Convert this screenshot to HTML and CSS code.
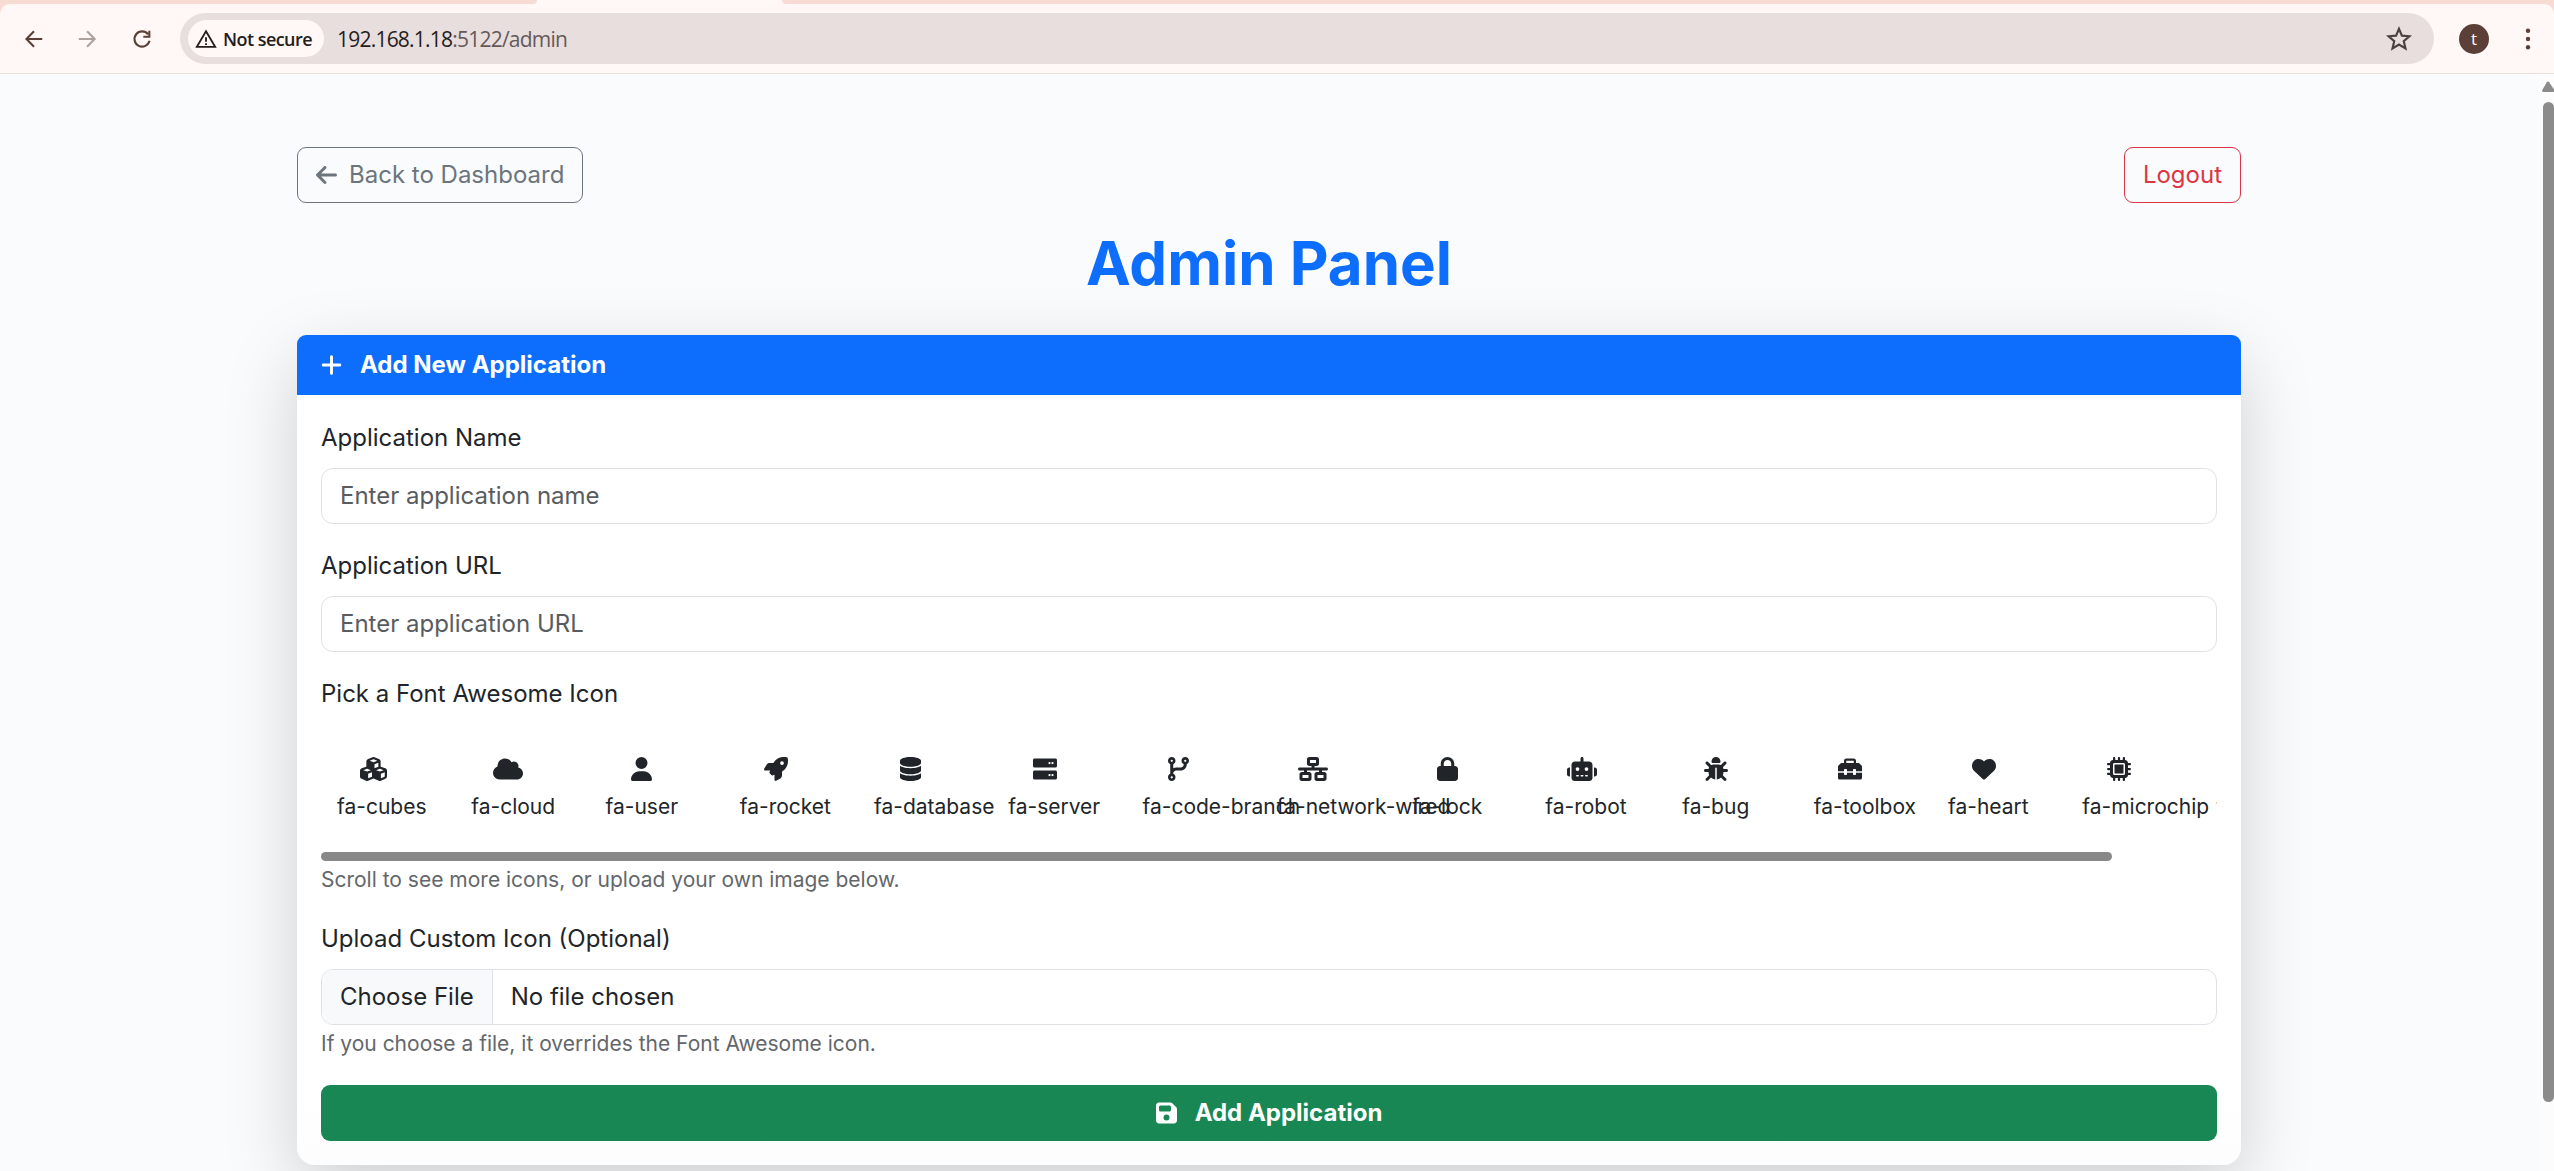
FILE: index.html
```html
<!DOCTYPE html>
<html lang="en">
<head>
<meta charset="utf-8">
<title>Admin Panel</title>
<link rel="stylesheet" href="styles.css">
</head>
<body>
<header class="browser">
  <div class="tabstrip"><div class="tabstrip-left"></div><div class="tabstrip-active"></div><div class="tabstrip-right"></div></div>
  <div class="toolbar">
    <svg class="nav-icon" viewBox="0 0 24 24"><path d="M21 12H4M12 3.500 3.800 12l8.200 8.500"/></svg>
    <svg class="nav-icon nav-disabled" viewBox="0 0 24 24"><path d="M2 12h17M11 3.500l8.200 8.500-8.200 8.500"/></svg>
    <svg class="nav-icon" viewBox="0 0 24 24"><path d="M18.600 6.800A8.300 8.300 0 1 0 20.200 14M20 3v6.600h-6.600"/></svg>
    <div class="omnibox">
      <div class="chip">
        <svg class="warn" viewBox="0 0 24 24"><path d="M12 3.500 22 20.500H2zM12 10v5M12 16.600v2"/></svg>
        <span>Not secure</span>
      </div>
      <div class="url"><span class="host">192.168.1.18</span>:5122/admin</div>
      <svg class="star" viewBox="0 0 24 24"><path d="M12 2.600l2.700 6.300 6.900.6-5.200 4.500 1.600 6.700-6-3.600-6 3.600 1.600-6.700-5.200-4.500 6.900-.6z"/></svg>
    </div>
    <div class="avatar">t</div>
    <svg class="dots" viewBox="0 0 6 24"><circle cx="3" cy="3.700" r="2.200"/><circle cx="3" cy="12" r="2.200"/><circle cx="3" cy="20.300" r="2.200"/></svg>
  </div>
</header>

<div class="viewport">
  <main class="page">
    <div class="container">
      <div class="topbar">
        <a class="btn btn-secondary"><svg class="fa" viewBox="0 0 448 512"><path d="M9.400 233.400c-12.500 12.500-12.500 32.800 0 45.300l160 160c12.500 12.500 32.800 12.500 45.300 0s12.500-32.800 0-45.300L109.200 288 416 288c17.700 0 32-14.300 32-32s-14.300-32-32-32l-306.700 0L214.600 118.600c12.500-12.500 12.500-32.800 0-45.300s-32.800-12.500-45.300 0l-160 160z"/></svg>Back to Dashboard</a>
        <a class="btn btn-danger">Logout</a>
      </div>
      <h1>Admin Panel</h1>
      <section class="card">
        <div class="card-header"><svg class="fa" viewBox="0 0 448 512"><path d="M256 80c0-17.700-14.300-32-32-32s-32 14.300-32 32l0 144L48 224c-17.700 0-32 14.300-32 32s14.300 32 32 32l144 0 0 144c0 17.700 14.300 32 32 32s32-14.300 32-32l0-144 144 0c17.700 0 32-14.300 32-32s-14.300-32-32-32l-144 0 0-144z"/></svg>Add New Application</div>
        <div class="card-body">
          <div class="field">
            <label class="label">Application Name</label>
            <div class="control placeholder">Enter application name</div>
          </div>
          <div class="field">
            <label class="label">Application URL</label>
            <div class="control placeholder">Enter application URL</div>
          </div>
          <div class="field">
            <label class="label">Pick a Font Awesome Icon</label>
            <div class="picker">
              <div class="icons">
                <div class="item"><svg class="fa" viewBox="0 0 576 512"><path d="M290.800 48.600l78.400 29.700L288 109.500 206.800 78.300l78.400-29.700c1.800-.7 3.800-.7 5.700 0zM136 92.500V204.700c-1.300 .4-2.600 .8-3.900 1.300l-96 36.400C14.400 250.600 0 271.500 0 294.700V413.900c0 22.200 13.100 42.300 33.500 51.300l96 42.200c14.400 6.300 30.700 6.300 45.100 0L288 457.500l113.500 49.900c14.400 6.300 30.700 6.300 45.100 0l96-42.200c20.300-8.900 33.500-29.100 33.500-51.300V294.700c0-23.300-14.400-44.100-36.100-52.400l-96-36.400c-1.300-.5-2.600-.9-3.900-1.300V92.500c0-23.300-14.400-44.100-36.100-52.400l-96-36.400c-12.800-4.800-26.900-4.800-39.700 0l-96 36.400C150.400 48.400 136 69.300 136 92.500zM392 210.600l-82.400 31.200V152.600L392 121v89.600zM154.800 250.900l78.400 29.700L152 311.700 70.800 280.600l78.400-29.700c1.800-.7 3.800-.7 5.700 0zm18.800 204.400V354.800L256 323.200v95.900l-82.400 36.200zM421.200 250.900c1.800-.7 3.800-.7 5.700 0l78.400 29.700L424 311.700l-81.200-31.100 78.400-29.700zM523.200 421.200l-77.600 34.100V354.800L528 323.200v90.700c0 3.200-1.900 6-4.800 7.300z"/></svg><span>fa-cubes</span></div>
                <div class="item"><svg class="fa" viewBox="0 0 640 512"><path d="M0 336c0 79.500 64.500 144 144 144l368 0c70.700 0 128-57.300 128-128c0-61.900-44-113.600-102.400-125.400c4.100-10.700 6.400-22.400 6.400-34.600c0-53-43-96-96-96c-19.700 0-38.100 6-53.300 16.200C367 64.200 315.300 32 256 32C167.600 32 96 103.600 96 192c0 2.700 .1 5.400 .2 8.100C40.200 219.800 0 273.200 0 336z"/></svg><span>fa-cloud</span></div>
                <div class="item"><svg class="fa" viewBox="0 0 448 512"><path d="M224 256A128 128 0 1 0 224 0a128 128 0 1 0 0 256zm-45.700 48C79.800 304 0 383.800 0 482.300C0 498.700 13.300 512 29.700 512l388.600 0c16.400 0 29.700-13.300 29.700-29.700C448 383.800 368.200 304 269.700 304l-91.400 0z"/></svg><span>fa-user</span></div>
                <div class="item"><svg class="fa" viewBox="0 0 512 512"><path d="M156.600 384.900L125.700 354c-8.500-8.500-11.500-20.800-7.700-32.200c3-8.900 7-20.500 11.800-33.800L24 288c-8.600 0-16.600-4.600-20.900-12.100s-4.200-16.700 .2-24.100l52.500-88.500c13-21.900 36.500-35.300 61.900-35.300l82.300 0c2.400-4 4.800-7.700 7.200-11.300C289.100-4.100 411.100-8.100 483.900 5.300c11.600 2.100 20.600 11.200 22.800 22.800c13.400 72.900 9.300 194.800-111.400 276.700c-3.500 2.400-7.300 4.800-11.300 7.200v82.300c0 25.400-13.400 49-35.300 61.900l-88.500 52.500c-7.400 4.400-16.600 4.500-24.100 .2s-12.100-12.200-12.100-20.900V380.800c-14.100 4.900-26.400 8.900-35.700 11.900c-11.200 3.600-23.400 .5-31.800-7.800zM384 168a40 40 0 1 0 0-80 40 40 0 1 0 0 80z"/></svg><span>fa-rocket</span></div>
                <div class="item"><svg class="fa" viewBox="0 0 448 512"><path d="M448 80v48c0 44.200-100.300 80-224 80S0 172.200 0 128V80C0 35.800 100.300 0 224 0S448 35.800 448 80zM393.200 214.700c20.800-7.400 39.900-16.900 54.800-28.600V288c0 44.200-100.300 80-224 80S0 332.200 0 288V186.100c14.900 11.800 34 21.200 54.800 28.600C99.700 230.700 159.500 240 224 240s124.300-9.300 169.200-25.300zM0 346.100c14.900 11.800 34 21.200 54.800 28.600C99.700 390.700 159.500 400 224 400s124.300-9.300 169.200-25.300c20.800-7.400 39.900-16.900 54.800-28.600V432c0 44.200-100.300 80-224 80S0 476.200 0 432V346.100z"/></svg><span>fa-database</span></div>
                <div class="item"><svg class="fa" viewBox="0 0 512 512"><path d="M32 32C14.400 32 0 46.400 0 64v128c0 17.600 14.400 32 32 32H480c17.600 0 32-14.400 32-32V64c0-17.600-14.400-32-32-32H32zm320 72a24 24 0 1 1 0 48 24 24 0 1 1 0-48zm40 24a24 24 0 1 1 48 0 24 24 0 1 1 -48 0zM32 288c-17.600 0-32 14.400-32 32v128c0 17.600 14.400 32 32 32H480c17.600 0 32-14.400 32-32V320c0-17.600-14.400-32-32-32H32zm320 72a24 24 0 1 1 0 48 24 24 0 1 1 0-48zm40 24a24 24 0 1 1 48 0 24 24 0 1 1 -48 0z"/></svg><span>fa-server</span></div>
                <div class="item"><svg class="fa" viewBox="0 0 448 512"><path d="M80 104a24 24 0 1 0 0-48 24 24 0 1 0 0 48zm80-24c0 32.800-19.700 61-48 73.300v87.800c18.800-10.900 40.700-17.100 64-17.100h96c35.300 0 64-28.700 64-64v-6.700C307.700 141 288 112.800 288 80c0-44.200 35.800-80 80-80s80 35.800 80 80c0 32.800-19.700 61-48 73.300V160c0 70.700-57.300 128-128 128H176c-35.300 0-64 28.700-64 64v6.700c28.300 12.300 48 40.500 48 73.300c0 44.200-35.800 80-80 80s-80-35.800-80-80c0-32.800 19.700-61 48-73.300V352 153.300C19.700 141 0 112.800 0 80C0 35.800 35.800 0 80 0s80 35.800 80 80zm232 0a24 24 0 1 0 -48 0 24 24 0 1 0 48 0zM80 456a24 24 0 1 0 0-48 24 24 0 1 0 0 48z"/></svg><span>fa-code-branch</span></div>
                <div class="item"><svg class="fa" viewBox="0 0 640 512"><path d="M256 64H384v64H256V64zM240 0c-26.500 0-48 21.500-48 48v96c0 26.500 21.500 48 48 48h48v32H32c-17.700 0-32 14.300-32 32s14.300 32 32 32h96v32H80c-26.500 0-48 21.500-48 48v96c0 26.500 21.500 48 48 48H240c26.500 0 48-21.500 48-48V368c0-26.500-21.500-48-48-48H192V288H448v32H400c-26.500 0-48 21.500-48 48v96c0 26.500 21.500 48 48 48H560c26.500 0 48-21.500 48-48V368c0-26.500-21.500-48-48-48H512V288h96c17.700 0 32-14.300 32-32s-14.300-32-32-32H352V192h48c26.500 0 48-21.500 48-48V48c0-26.500-21.500-48-48-48H240zM96 448V384H224v64H96zm320-64H544v64H416V384z"/></svg><span>fa-network-wired</span></div>
                <div class="item"><svg class="fa" viewBox="0 0 448 512"><path d="M144 144v48H304V144c0-44.200-35.800-80-80-80s-80 35.800-80 80zM80 192V144C80 64.500 144.500 0 224 0s144 64.500 144 144v48h16c35.300 0 64 28.700 64 64V448c0 35.300-28.700 64-64 64H64c-35.300 0-64-28.700-64-64V256c0-35.300 28.700-64 64-64H80z"/></svg><span>fa-lock</span></div>
                <div class="item"><svg class="fa" viewBox="0 0 640 512"><path d="M320 0c17.700 0 32 14.300 32 32V96H472c39.800 0 72 32.200 72 72V440c0 39.800-32.200 72-72 72H168c-39.800 0-72-32.200-72-72V168c0-39.800 32.200-72 72-72H288V32c0-17.700 14.300-32 32-32zM208 384c-8.800 0-16 7.200-16 16s7.200 16 16 16h32c8.800 0 16-7.200 16-16s-7.200-16-16-16H208zm96 0c-8.800 0-16 7.200-16 16s7.200 16 16 16h32c8.800 0 16-7.200 16-16s-7.200-16-16-16H304zm96 0c-8.800 0-16 7.200-16 16s7.200 16 16 16h32c8.800 0 16-7.200 16-16s-7.200-16-16-16H400zM264 256a40 40 0 1 0 -80 0 40 40 0 1 0 80 0zm152 40a40 40 0 1 0 0-80 40 40 0 1 0 0 80zM48 224H64V416H48c-26.500 0-48-21.500-48-48V272c0-26.500 21.500-48 48-48zm544 0c26.500 0 48 21.500 48 48v96c0 26.500-21.500 48-48 48H576V224h16z"/></svg><span>fa-robot</span></div>
                <div class="item"><svg class="fa" viewBox="0 0 512 512"><path d="M256 0c53 0 96 43 96 96v3.600c0 15.700-12.700 28.400-28.400 28.400H188.400c-15.700 0-28.400-12.700-28.400-28.400V96c0-53 43-96 96-96zM41.400 105.400c12.500-12.500 32.800-12.500 45.300 0l64 64c.7 .7 1.300 1.400 1.900 2.100c14.200-7.300 30.400-11.400 47.500-11.400H312c17.100 0 33.200 4.100 47.500 11.400c.6-.7 1.200-1.400 1.900-2.100l64-64c12.500-12.500 32.800-12.500 45.300 0s12.500 32.800 0 45.300l-64 64c-.7 .7-1.400 1.300-2.100 1.900c6.200 12 10.100 25.300 11.100 39.500H480c17.700 0 32 14.300 32 32s-14.300 32-32 32H416c0 24.600-5.500 47.800-15.400 68.600c2.200 1.300 4.200 2.900 6 4.800l64 64c12.500 12.500 12.500 32.800 0 45.300s-32.800 12.500-45.300 0l-63.100-63.100c-24.500 21.800-55.800 36.200-90.300 39.600V240c0-8.800-7.200-16-16-16s-16 7.200-16 16V479.200c-34.500-3.400-65.800-17.800-90.300-39.600L86.600 502.600c-12.500 12.500-32.800 12.500-45.300 0s-12.500-32.800 0-45.300l64-64c1.900-1.900 3.900-3.400 6-4.800C101.500 367.800 96 344.600 96 320H32c-17.700 0-32-14.300-32-32s14.300-32 32-32H96.300c1.100-14.100 5-27.500 11.100-39.500c-.7-.6-1.400-1.200-2.100-1.900l-64-64c-12.500-12.500-12.500-32.800 0-45.300z"/></svg><span>fa-bug</span></div>
                <div class="item"><svg class="fa" viewBox="0 0 512 512"><path d="M502.600 182.600l-45.250-45.250C451.400 131.400 443.300 128 434.800 128H384V80C384 53.500 362.500 32 336 32h-160C149.500 32 128 53.500 128 80V128H77.250c-8.500 0-16.620 3.375-22.620 9.375L9.375 182.600C3.375 188.600 0 196.800 0 205.300V304h128v-32C128 263.100 135.100 256 144 256h32C184.900 256 192 263.100 192 272v32h128v-32C320 263.100 327.100 256 336 256h32C376.900 256 384 263.100 384 272v32h128V205.300C512 196.800 508.600 188.600 502.600 182.600zM336 128h-160V80h160V128zM384 368c0 8.875-7.125 16-16 16h-32c-8.875 0-16-7.125-16-16v-32H192v32C192 376.900 184.900 384 176 384h-32C135.100 384 128 376.900 128 368v-32H0V448c0 17.620 14.380 32 32 32h448c17.620 0 32-14.380 32-32v-112h-128V368z"/></svg><span>fa-toolbox</span></div>
                <div class="item"><svg class="fa" viewBox="0 0 512 512"><path d="M47.600 300.400L228.300 469.100c7.500 7 17.400 10.900 27.700 10.900s20.200-3.900 27.700-10.900L464.400 300.400c30.400-28.300 47.600-68 47.600-109.500v-5.800c0-69.900-50.500-129.500-119.400-141C347 36.500 300.600 51.400 268 84L256 96 244 84c-32.600-32.600-79-47.500-124.600-39.900C50.500 55.600 0 115.200 0 185.100v5.800c0 41.500 17.200 81.200 47.600 109.500z"/></svg><span>fa-heart</span></div>
                <div class="item"><svg class="fa" viewBox="0 0 512 512"><path d="M176 24c0-13.300-10.700-24-24-24s-24 10.700-24 24V64c-35.300 0-64 28.700-64 64H24c-13.300 0-24 10.700-24 24s10.700 24 24 24H64v56H24c-13.300 0-24 10.700-24 24s10.700 24 24 24H64v56H24c-13.300 0-24 10.700-24 24s10.700 24 24 24H64c0 35.300 28.700 64 64 64v40c0 13.300 10.700 24 24 24s24-10.700 24-24V448h56v40c0 13.300 10.700 24 24 24s24-10.700 24-24V448h56v40c0 13.300 10.700 24 24 24s24-10.700 24-24V448c35.300 0 64-28.700 64-64h40c13.300 0 24-10.700 24-24s-10.700-24-24-24H448V280h40c13.300 0 24-10.700 24-24s-10.700-24-24-24H448V176h40c13.300 0 24-10.700 24-24s-10.700-24-24-24H448c0-35.300-28.700-64-64-64V24c0-13.300-10.700-24-24-24s-24 10.700-24 24V64H280V24c0-13.300-10.700-24-24-24s-24 10.700-24 24V64H176V24zM160 128H352c17.700 0 32 14.300 32 32V352c0 17.700-14.300 32-32 32H160c-17.700 0-32-14.300-32-32V160c0-17.700 14.300-32 32-32zm192 32H160V352H352V160z"/></svg><span>fa-microchip</span></div>
                <div class="item"><span class="item-cut">fa-terminal</span></div>
              </div>
              <div class="hscroll"></div>
            </div>
            <small class="help">Scroll to see more icons, or upload your own image below.</small>
          </div>
          <div class="field">
            <label class="label">Upload Custom Icon (Optional)</label>
            <div class="control file"><span class="file-button">Choose File</span><span class="file-name">No file chosen</span></div>
            <small class="help">If you choose a file, it overrides the Font Awesome icon.</small>
          </div>
          <div class="submit"><svg class="fa" viewBox="0 0 448 512"><path d="M64 32C28.700 32 0 60.700 0 96V416c0 35.300 28.700 64 64 64H384c35.300 0 64-28.700 64-64V173.300c0-17-6.700-33.300-18.700-45.300L352 50.700C340 38.700 323.700 32 306.700 32H64zm0 96c0-17.700 14.300-32 32-32H288c17.700 0 32 14.300 32 32v64c0 17.700-14.300 32-32 32H96c-17.700 0-32-14.300-32-32V128zM224 288a64 64 0 1 1 0 128 64 64 0 1 1 0-128z"/></svg>Add Application</div>
        </div>
      </section>
    </div>
  </main>
  <div class="vscroll"><svg class="up" viewBox="0 0 12 11"><path d="M4.800 1.200Q6 0 7.200 1.200L12 8.500V11H1Q-.3 10.500.3 9z"/></svg><div class="thumb"></div></div>
</div>
</body>
</html>
```
FILE: styles.css
```css
* { box-sizing: border-box; }
html, body { height: 100%; margin: 0; overflow: hidden; }
body {
  display: flex;
  flex-direction: column;
  font-family: Inter, "Liberation Sans", sans-serif;
  font-size: 24px;
  line-height: 36px;
  color: #212529;
  background: #f9fbfd;
}
.fa { height: 24px; width: auto; fill: currentColor; flex: none; display: block; }

/* Browser chrome */
.browser {
  flex: none;
  height: 75px;
  background: #f8dcd3;
  border-bottom: 1px solid #fdfdfe;
  font-family: "Open Sans", "Noto Sans", sans-serif;
}
.tabstrip { display: flex; height: 4px; background: #fff8f6; }
.tabstrip-left { width: 537px; background: #f8dcd3; border-bottom-right-radius: 6px; }
.tabstrip-active { width: 245px; }
.tabstrip-right { flex: 1; background: #f8dcd3; border-bottom-left-radius: 6px; }
.toolbar { display: flex; align-items: center; height: 70px; padding: 0 23px; border-radius: 10px 10px 0 0; background: #fff8f6; border-bottom: 1px solid #eedddb; }
.nav-icon { width: 22px; height: 22px; margin-right: 32px; fill: none; stroke: #5c4037; stroke-width: 2.3; flex: none; }
.nav-disabled { stroke: #ada09d; }
.nav-icon:nth-child(3) { margin-right: 27px; }
.omnibox { display: flex; align-items: center; width: 2254px; height: 51px; padding: 0 24px 0 8px; border-radius: 26px; background: #e9dede; flex: none; }
.chip { display: flex; align-items: center; gap: 6px; width: 136px; height: 37px; padding-left: 7px; border-radius: 19px; background: #fff8f6; color: #241d1c; font-size: 18px; font-weight: 600; letter-spacing: -.55px; white-space: nowrap; }
.warn { width: 22px; height: 22px; fill: none; stroke: #241d1c; stroke-width: 2; }
.url { flex: 1; margin-left: 13px; font-size: 21px; letter-spacing: -.78px; color: #645a59; }
.host { color: #241d1c; }
.star { width: 26px; height: 26px; margin-right: -2px; fill: none; stroke: #4b4140; stroke-width: 2; }
.avatar { flex: none; display: flex; align-items: center; justify-content: center; width: 30px; height: 30px; margin-left: 25px; border-radius: 50%; background: #5c4037; color: #fff; font-size: 17px; }
.dots { flex: none; width: 6px; height: 24px; margin-left: 36px; fill: #5c4037; }

/* Page */
.viewport { flex: 1; display: flex; min-height: 0; overflow: hidden; }
.page { flex: 1; min-width: 0; overflow: hidden; padding-top: 72px; }
.container { width: 1944px; margin: 0 auto; }
.topbar { display: flex; justify-content: space-between; }
.btn { display: flex; align-items: center; gap: 12px; height: 56px; padding: 0 18px; border: 1px solid; border-radius: 9px; }
.btn-secondary { color: #6c757d; }
.btn-danger { color: #dc3545; }
h1 { margin: 24px 0 36px; font-size: 60px; line-height: 72px; font-weight: 700; text-align: center; color: #0d6efd; }
.card { border-radius: 18px; background: linear-gradient(#fff 90%, #fdfdfd); box-shadow: 0 24px 72px rgba(0, 0, 0, .175); }
.card-header { display: flex; align-items: center; gap: 18px; height: 60px; padding: 0 24px; border-radius: 9px 9px 0 0; background: #0d6efd; color: #fff; font-weight: 700; }
.card-body { padding: 25px 24px 24px; }
.field { margin-bottom: 24px; }
.label { display: block; margin-bottom: 12px; }
.control { display: flex; align-items: center; height: 56px; padding: 0 18px; border: 1px solid #dee2e6; border-radius: 12px; background: #fff; overflow: hidden; }
.placeholder { color: #595c5f; }
.help { display: block; height: 36px; padding-top: 1px; font-size: 21px; color: #63676b; }

/* Icon picker */
.picker { height: 137px; display: flex; flex-direction: column; justify-content: space-between; overflow: hidden; }
.icons { display: flex; padding: 33px 0 0 16px; overflow: hidden; }
.item { flex: none; width: 72.500px; margin-right: 61.750px; display: flex; flex-direction: column; align-items: center; gap: 10px; }
.item span { min-width: 100%; align-self: flex-start; text-align: center; white-space: nowrap; font-size: 21px; line-height: 31px; }
.item .item-cut { margin-top: 34px; }
.hscroll { width: 1791px; height: 9px; border-radius: 4.500px; background: #888; }

.file { padding: 0; }
.file-button { display: flex; align-items: center; height: 100%; padding: 0 18px; border-right: 1px solid #dee2e6; background: #f8f9fa; }
.file-name { margin-left: 18px; }
.submit { display: flex; align-items: center; justify-content: center; gap: 18px; height: 56px; border-radius: 9px; background: #198754; color: #fff; font-weight: 700; }

/* Page scrollbar */
.vscroll { flex: none; width: 16px; padding: 6px 0 0 4px; background: #fcfcfc; }
.up { display: block; width: 12px; height: 11px; fill: #8b8b8b; }
.thumb { width: 11px; height: 1000px; margin: 10px 0 0 1px; border-radius: 6px; background: #8b8b8b; }
```
